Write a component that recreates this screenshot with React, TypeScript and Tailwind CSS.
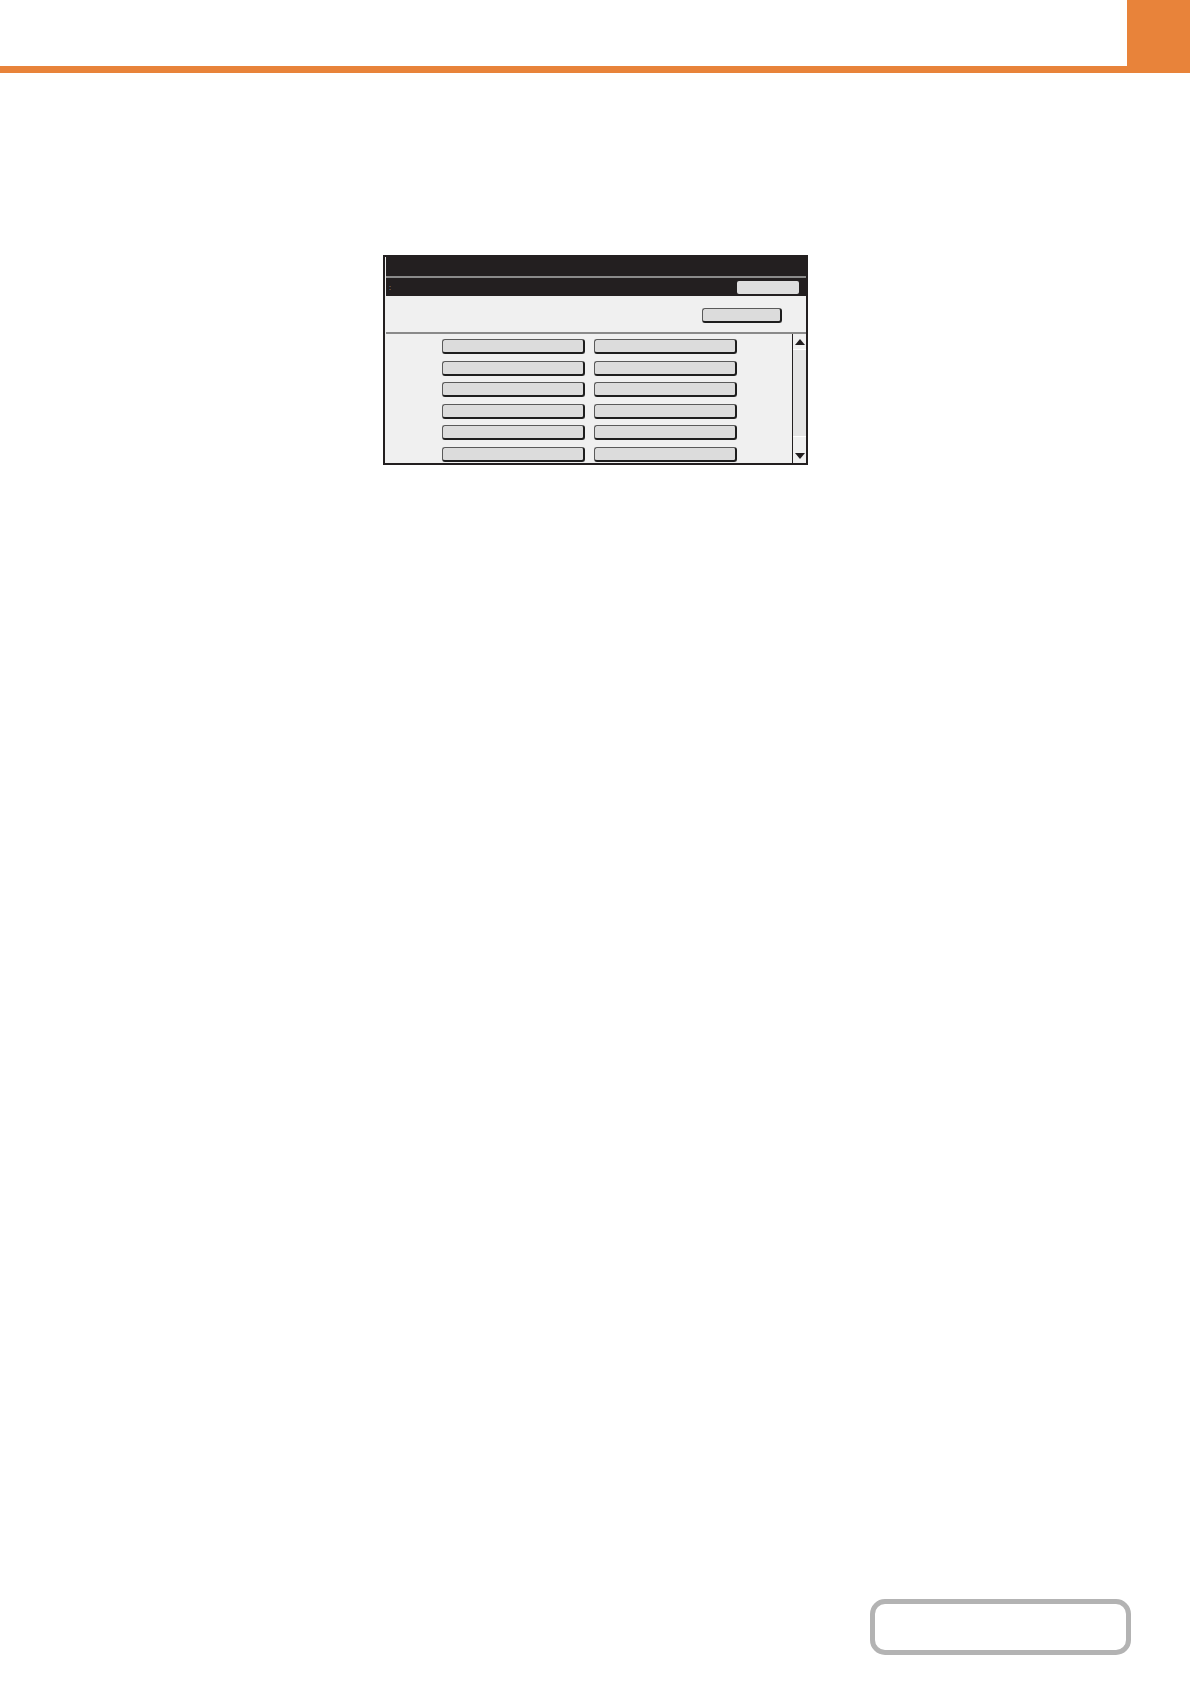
import React from "react";

function Btn({ className = "" }: { className?: string }) {
  return (
    <div
      className={`h-[15px] rounded-[3px] border border-[#5a5a5a] border-b-2 border-r-2 border-b-[#1e1e1e] border-r-[#1e1e1e] bg-[#dcdcdc] ${className}`}
    />
  );
}

export default function App() {
  const rows = [0, 1, 2, 3, 4, 5];
  return (
    <div className="flex h-[1684px] w-[1190px] flex-col bg-white" style={{ fontFamily: '"Liberation Sans", Arial, sans-serif' }}>
      {/* header */}
      <div className="flex h-[73px] w-full">
        <div className="flex flex-1 flex-col">
          <div className="flex-1" />
          <div className="h-[7px] bg-[#e8833a]" />
        </div>
        <div className="h-[73px] w-[63px] bg-[#e8833a]" />
      </div>

      {/* dialog */}
      <div className="ml-[383px] mt-[182px] flex h-[210px] w-[425px] flex-col border-2 border-[#231f20] bg-[#f0f0f0] pl-[1px]">
        <div className="h-[19px] bg-[#231f20]" />
        <div className="h-[2px] bg-[#8a8a8a]" />
        <div className="flex h-[18px] items-center justify-between bg-[#231f20] pl-[3px] pr-[7px]">
          <span className="text-[7px] leading-none text-[#bbbbbb]">:</span>
          <div className="h-[13px] w-[62px] rounded-[2px] bg-[#dedede]" />
        </div>
        <div className="flex h-[36px] items-start justify-end pr-[24px] pt-[12px]">
          <Btn className="w-[80px]" />
        </div>
        <div className="h-[2px] bg-[#8a8a8a]" />
        <div className="flex flex-1">
          <div className="flex flex-1 flex-col gap-[6.5px] pl-[56px] pt-[5px]">
            {rows.map((r) => (
              <div key={r} className="flex gap-[9px]">
                <Btn className="w-[143px]" />
                <Btn className="w-[143px]" />
              </div>
            ))}
          </div>
          <div className="flex w-[14px] flex-col border-l border-[#231f20] bg-[#e8e8e8]">
            <div className="flex h-[15px] items-center justify-center bg-[#f0f0f0]">
              <svg width="10" height="6" viewBox="0 0 10 6"><path d="M0 6 L5 0 L10 6 Z" fill="#231f20" /></svg>
            </div>
            <div className="h-[1px] bg-white" />
            <div className="flex-1 bg-[#e4e4e4]" />
            <div className="h-[1px] bg-white" />
            <div className="flex h-[26px] items-end justify-center bg-[#f0f0f0] pb-[4px]">
              <svg width="10" height="6" viewBox="0 0 10 6"><path d="M0 0 L5 6 L10 0 Z" fill="#231f20" /></svg>
            </div>
          </div>
        </div>
      </div>

      {/* bottom box */}
      <div className="mb-[29px] ml-[870px] mt-auto h-[56px] w-[261px] rounded-[15px] border-[5px] border-[#b3b3b3] bg-white" />
    </div>
  );
}
